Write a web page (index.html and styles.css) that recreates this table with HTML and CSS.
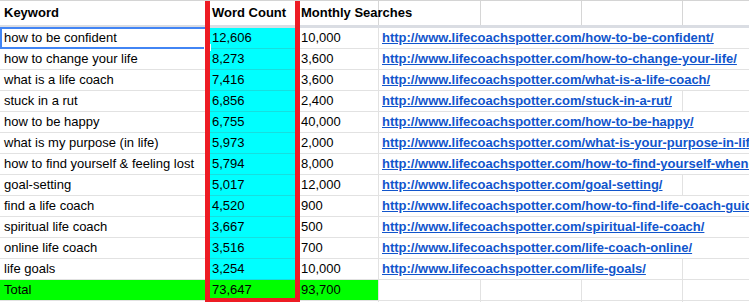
FILE: index.html
```html
<!DOCTYPE html>
<html>
<head>
<meta charset="utf-8">
<link rel="stylesheet" href="styles.css">
</head>
<body>
<div class="sheet">
  <div class="row head">
    <div class="cell a b-txt">Keyword</div>
    <div class="cell bcol b-txt">Word Count</div>
    <div class="cell c b-txt">Monthly Searches</div>
    <div class="cell"></div>
    <div class="cell"></div>
    <div class="cell"></div>
    <div class="cell"></div>
  </div>
  <div class="row">
    <div class="cell a selected">how to be confident</div>
    <div class="cell bcol cyan">12,606</div>
    <div class="cell c">10,000</div>
    <div class="cell link span4"><a href="#">http://www.lifecoachspotter.com/how-to-be-confident/</a></div>
  </div>
  <div class="row">
    <div class="cell a">how to change your life</div>
    <div class="cell bcol cyan">8,273</div>
    <div class="cell c">3,600</div>
    <div class="cell link span4"><a href="#">http://www.lifecoachspotter.com/how-to-change-your-life/</a></div>
  </div>
  <div class="row">
    <div class="cell a">what is a life coach</div>
    <div class="cell bcol cyan">7,416</div>
    <div class="cell c">3,600</div>
    <div class="cell link span4"><a href="#">http://www.lifecoachspotter.com/what-is-a-life-coach/</a></div>
  </div>
  <div class="row">
    <div class="cell a">stuck in a rut</div>
    <div class="cell bcol cyan">6,856</div>
    <div class="cell c">2,400</div>
    <div class="cell link span3"><a href="#">http://www.lifecoachspotter.com/stuck-in-a-rut/</a></div>
    <div class="cell"></div>
  </div>
  <div class="row">
    <div class="cell a">how to be happy</div>
    <div class="cell bcol cyan">6,755</div>
    <div class="cell c">40,000</div>
    <div class="cell link span4"><a href="#">http://www.lifecoachspotter.com/how-to-be-happy/</a></div>
  </div>
  <div class="row">
    <div class="cell a">what is my purpose (in life)</div>
    <div class="cell bcol cyan">5,973</div>
    <div class="cell c">2,000</div>
    <div class="cell link span4"><a href="#">http://www.lifecoachspotter.com/what-is-your-purpose-in-life/</a></div>
  </div>
  <div class="row">
    <div class="cell a">how to find yourself &amp; feeling lost</div>
    <div class="cell bcol cyan">5,794</div>
    <div class="cell c">8,000</div>
    <div class="cell link span4"><a href="#">http://www.lifecoachspotter.com/how-to-find-yourself-when-you-feel-lost/</a></div>
  </div>
  <div class="row">
    <div class="cell a">goal-setting</div>
    <div class="cell bcol cyan">5,017</div>
    <div class="cell c">12,000</div>
    <div class="cell link span3"><a href="#">http://www.lifecoachspotter.com/goal-setting/</a></div>
    <div class="cell"></div>
  </div>
  <div class="row">
    <div class="cell a">find a life coach</div>
    <div class="cell bcol cyan">4,520</div>
    <div class="cell c">900</div>
    <div class="cell link span4"><a href="#">http://www.lifecoachspotter.com/how-to-find-life-coach-guide/</a></div>
  </div>
  <div class="row">
    <div class="cell a">spiritual life coach</div>
    <div class="cell bcol cyan">3,667</div>
    <div class="cell c">500</div>
    <div class="cell link span4"><a href="#">http://www.lifecoachspotter.com/spiritual-life-coach/</a></div>
  </div>
  <div class="row">
    <div class="cell a">online life coach</div>
    <div class="cell bcol cyan">3,516</div>
    <div class="cell c">700</div>
    <div class="cell link span4"><a href="#">http://www.lifecoachspotter.com/life-coach-online/</a></div>
  </div>
  <div class="row">
    <div class="cell a">life goals</div>
    <div class="cell bcol cyan">3,254</div>
    <div class="cell c">10,000</div>
    <div class="cell link span3"><a href="#">http://www.lifecoachspotter.com/life-goals/</a></div>
    <div class="cell"></div>
  </div>
  <div class="row">
    <div class="cell a green">Total</div>
    <div class="cell bcol green">73,647</div>
    <div class="cell c green">93,700</div>
    <div class="cell"></div>
    <div class="cell"></div>
    <div class="cell"></div>
    <div class="cell"></div>
  </div>
  <div class="row">
    <div class="cell a"></div>
    <div class="cell bcol"></div>
    <div class="cell c"></div>
    <div class="cell"></div>
    <div class="cell"></div>
    <div class="cell"></div>
    <div class="cell"></div>
  </div>
  <div class="highlight"></div>
</div>
</body>
</html>
```

FILE: styles.css
```css
html, body {
  margin: 0;
  padding: 0;
  background: #ffffff;
}

.sheet {
  position: relative;
  width: 749px;
  height: 302px;
  overflow: hidden;
  border-top: 1px solid #d4d4d4;
  box-sizing: border-box;
  font-family: "Liberation Sans", Arial, sans-serif;
  font-size: 13px;
  color: #000000;
}

.row {
  display: grid;
  grid-template-columns: 209px 89px 81px 102px 101px 101px 101px;
  width: 784px;
}

.row.head {
  border-bottom: 3px solid #dadde3;
}

.row.head .cell {
  height: 24px;
  line-height: 23px;
  border-bottom: none;
  border-right-color: #d6d6d6;
}

.cell {
  box-sizing: border-box;
  height: 21px;
  line-height: 20px;
  padding: 0 3px;
  border-right: 1px solid #e2e2e2;
  border-bottom: 1px solid #e2e2e2;
  white-space: nowrap;
  overflow: visible;
}

.cell.a {
  padding-left: 4px;
}

.b-txt {
  font-weight: bold;
}

.cyan {
  background: #00ffff;
  border-bottom-color: #17dede;
}

.green {
  background: #00ff00;
}

.link a {
  color: #1155cc;
  font-weight: bold;
  text-decoration: underline;
}

.span3 {
  grid-column: span 3;
}

.span4 {
  grid-column: span 4;
}

.selected {
  position: relative;
}

.selected::after {
  content: "";
  position: absolute;
  left: 0;
  top: -1px;
  right: -1px;
  bottom: -1px;
  border: 2px solid #4285f4;
}

.selected::before {
  content: "";
  position: absolute;
  right: -3px;
  bottom: -3px;
  width: 5px;
  height: 5px;
  background: #4285f4;
  border: 1px solid #ffffff;
  z-index: 1;
}

.highlight {
  position: absolute;
  left: 205px;
  top: -6px;
  width: 95px;
  height: 308px;
  box-sizing: border-box;
  border: 5px solid #ed1c24;
  z-index: 2;
}
```
